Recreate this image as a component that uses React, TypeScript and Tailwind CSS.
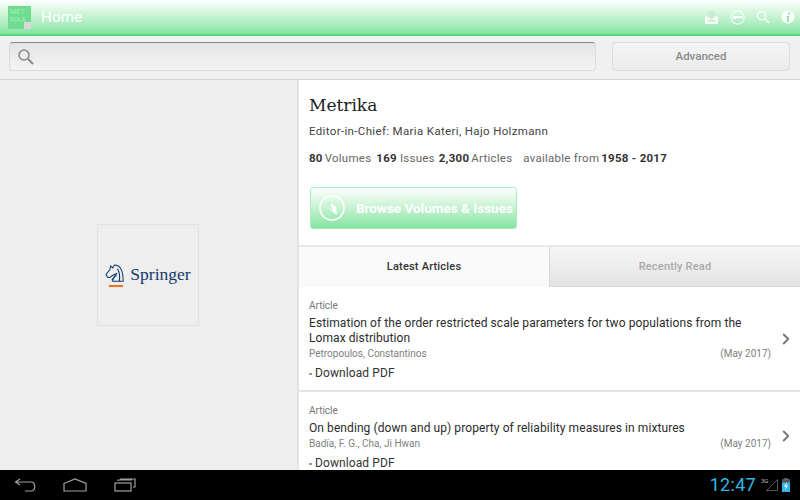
import { ChevronRight } from 'lucide-react';

function SpringerLogo() {
  return (
    <div className="flex h-[102px] w-[102px] items-center justify-center border border-[#e2e2e2] bg-[#eeeeee]">
      <div className="flex items-center">
        <svg width="21" height="27" viewBox="0 0 22 28" fill="none" stroke="#123a6b" strokeWidth="1.100" className="mr-[4px]">
          <path d="M3 16 L1 13 L5 8 L6 4 L8 6 L10 3 C15 3 19 8 19 20 L8 20 C8 16 11 15 12 12 L8 14 L5 16 Z" />
          <path d="M13 7 C15 10 16 14 15 20" />
          <path d="M7 19 L12 13" />
          <path d="M4 25 L19 25" stroke="#e2762c" strokeWidth="2.200" />
        </svg>
        <span className="font-['Liberation_Serif',serif] text-[17.500px] leading-none text-[#123a6b]">Springer</span>
      </div>
    </div>
  );
}

function ArticleRow({ title, authors, compact }: { title: React.ReactNode; authors: string; compact?: boolean }) {
  return (
    <div className={`relative border-b-2 border-[#e4e4e4] bg-white pl-[11px] pr-[29px] pt-[12px] ${compact ? 'h-[90px]' : 'h-[105px]'}`}>
      <div className="text-[10px] leading-[13px] text-[#777777]">Article</div>
      <div className="mt-[4px] text-[12px] leading-[15px] tracking-[0.08px] text-[#2c2c2c]">{title}</div>
      <div className="flex justify-between text-[10px] leading-[15px] text-[#808080]">
        <span>{authors}</span>
        <span>(May 2017)</span>
      </div>
      <div className="mt-[5px] flex items-center text-[12px] leading-[15px] tracking-[0.1px] text-[#333333]">
        <span className="mr-[3px] h-[2px] w-[3px] bg-[#999999]" />
        Download PDF
      </div>
      <ChevronRight className="absolute right-[5px] top-1/2 -translate-y-1/2 text-[#777777]" size={18} strokeWidth={2.5} />
    </div>
  );
}

export default function App() {
  return (
    <div className="flex h-[500px] w-[800px] flex-col overflow-hidden bg-[#eeeeee] font-['Roboto',sans-serif]">
      {/* action bar */}
      <div className="flex h-[36px] shrink-0 items-center border-b-2 border-[#4fdc7a] bg-gradient-to-b from-white to-[#84e4a2] pl-[8px] pr-[5px]">
        <div className="relative mt-[1px] h-[23px] w-[23px] bg-[#6fdc90] pl-[2px] pt-[2px] text-[7px] leading-[8px] tracking-[0.2px] text-[#a5ecba]">
          MET<br />RIKA
          <span className="absolute bottom-0 right-0 h-[7px] w-[7px] bg-[#d8d8d8]" />
        </div>
        <span className="ml-[10px] mt-[1px] text-[15px] tracking-[0.2px] text-white">Home</span>
        <div className="ml-auto flex items-center gap-[11px]">
          <svg width="15" height="15" viewBox="0 0 16 16" fill="white" opacity="0.9">
            <path d="M5 1h6v4h2L8 8.500 3 5h2z" fill="#c9ecd4" />
            <path d="M1 7h3l4 3 4-3h3v8H1z" />
            <rect x="4" y="11" width="8" height="1" fill="#9bdcae" />
          </svg>
          <svg width="15" height="15" viewBox="0 0 17 17" fill="none" stroke="white" strokeWidth="1.200" opacity="0.9">
            <circle cx="8.500" cy="8.500" r="7.500" />
            <path d="M3.500 8.500h10v-1h-7" strokeWidth="1.500" />
            <circle cx="5" cy="8.500" r="1.500" fill="white" />
          </svg>
          <svg width="14" height="14" viewBox="0 0 15 15" fill="none" stroke="white" strokeWidth="1.300" opacity="0.9">
            <circle cx="6" cy="6" r="4.500" />
            <path d="M9.500 9.500L14 14" strokeWidth="1.600" />
          </svg>
          <svg width="14" height="14" viewBox="0 0 15 15">
            <circle cx="7.500" cy="7.500" r="7" fill="white" />
            <circle cx="8.500" cy="3.800" r="1.200" fill="#84e4a2" />
            <path d="M6 6.500h3L8 11.500h1l-.3 1H5.800L7 7.500H5.800z" fill="#84e4a2" />
          </svg>
        </div>
      </div>

      {/* search bar */}
      <div className="flex h-[44px] shrink-0 items-center gap-[16px] border-b border-[#d6d6d6] bg-[#f0f0f0] pb-[2px] pl-[9px] pr-[10px]">
        <div className="flex h-[29px] w-[587px] items-center rounded-[4px] border border-[#dcdcdc] border-t-[#888888] bg-gradient-to-b from-[#e4e4e4] to-[#f4f4f4] pl-[7px]">
          <svg width="17" height="17" viewBox="0 0 17 17" fill="none" stroke="#888888" strokeWidth="1.500">
            <circle cx="7" cy="7" r="5" />
            <path d="M11 11l5 5" strokeWidth="2" />
          </svg>
        </div>
        <div className="flex h-[29px] w-[178px] items-center justify-center rounded-[4px] border border-[#dcdcdc] bg-gradient-to-b from-[#f4f4f4] to-[#ebebeb] pt-[1px] text-[11.500px] font-medium text-[#8a8a8a]">
          Advanced
        </div>
      </div>

      <div className="flex min-h-0 flex-1">
        {/* cover */}
        <div className="flex w-[299px] shrink-0 items-center justify-center border-r-2 border-[#e4e4e4] bg-[#eeeeee] pr-[1px]">
          <SpringerLogo />
        </div>

        {/* details */}
        <div className="min-w-0 flex-1 overflow-hidden bg-white">
          <div className="h-[167px] border-b-2 border-[#e8e8e8] pl-[10px] pt-[13px]">
            <div className="font-['DejaVu_Serif',serif] text-[17px] leading-[24px] text-[#222222]">Metrika</div>
            <div className="mt-[7px] text-[11.500px] leading-[15px] tracking-[0.35px] text-[#444444]">Editor-in-Chief: Maria Kateri, Hajo Holzmann</div>
            <div className="mt-[12px] flex text-[11.500px] leading-[15px] tracking-[0.25px] text-[#666666]">
              <b className="mr-[2px] font-bold text-[#333333]">80</b>Volumes
              <b className="ml-[5px] mr-[3px] font-bold text-[#333333]">169</b>Issues
              <b className="ml-[4px] mr-[2px] font-bold text-[#333333]">2,300</b>Articles
              <span className="ml-[11px]">available from</span>
              <b className="ml-[2px] font-bold text-[#333333]">1958 - 2017</b>
            </div>
            <div className="ml-[1px] mt-[21px] flex h-[42px] w-[207px] items-center rounded-[3px] border border-[#a9efbd] bg-gradient-to-b from-white to-[#84e4a2] pl-[8px] text-white">
              <svg width="26" height="26" viewBox="0 0 26 26" fill="none">
                <circle cx="13" cy="13" r="12" stroke="white" strokeWidth="1.500" />
                <path d="M10 7l7 5 1 8-7-5z" fill="white" />
                <path d="M10 7l3 9" stroke="#a8e8bc" strokeWidth="1" />
              </svg>
              <span className="ml-[11px] whitespace-nowrap text-[13.500px] font-bold">Browse Volumes &amp; Issues</span>
            </div>
          </div>

          {/* tabs */}
          <div className="flex h-[40px]">
            <div className="flex w-[250px] items-center justify-center bg-[#fafafa] pt-[1px] text-[11px] font-medium tracking-[0.2px] text-[#333333]">Latest Articles</div>
            <div className="flex flex-1 items-center justify-center border-b border-l border-[#d8d8d8] bg-gradient-to-b from-[#f6f6f6] to-[#e4e4e4] pt-[2px] text-[11px] font-medium tracking-[0.2px] text-[#aaaaaa]">Recently Read</div>
          </div>

          <div className="-ml-[1px]">
            <ArticleRow
              title={<>Estimation of the order restricted scale parameters for two populations from the<br />Lomax distribution</>}
              authors="Petropoulos, Constantinos"
            />
            <ArticleRow compact title="On bending (down and up) property of reliability measures in mixtures" authors="Badía, F. G., Cha, Ji Hwan" />
          </div>
        </div>
      </div>

      {/* system bar */}
      <div className="flex h-[30px] shrink-0 items-center bg-black pl-[14px] pr-[10px]">
        <svg width="22" height="14" viewBox="0 0 22 14" fill="none" stroke="#a0a0a0" strokeWidth="1.200">
          <path d="M6 1L1.500 4 6 7M2 4h15c5 0 5 9 0 9h-6" />
        </svg>
        <svg width="24" height="14" viewBox="0 0 24 14" fill="none" stroke="#a0a0a0" strokeWidth="1.200" className="ml-[27px]">
          <path d="M1 5.500L12 1l11 4.500V13H1z" />
        </svg>
        <svg width="22" height="14" viewBox="0 0 22 14" fill="none" stroke="#a0a0a0" strokeWidth="1.200" className="ml-[27px]">
          <rect x="1" y="5" width="16" height="8" />
          <path d="M4 3V2h14v0M19 9h2V1H6" />
        </svg>
        <span className="ml-auto text-[18px] leading-none tracking-[0.3px] text-[#33b5e5]">12:47</span>
        <span className="relative ml-[5px] flex h-[16px] w-[17px] items-start">
          <span className="text-[6px] leading-[7px] text-[#bbbbbb]">3G</span>
          <svg width="12" height="14" viewBox="0 0 14 14" fill="none" stroke="#666666" className="absolute right-0 top-[1px]">
            <path d="M0.500 13.500L13.500 0.500V13.500Z" />
          </svg>
        </span>
        <svg width="8" height="14" viewBox="0 0 8 14" className="ml-[4px]">
          <rect x="2" y="0" width="4" height="2" fill="#555555" />
          <rect x="0" y="1.500" width="8" height="12.500" fill="#33b5e5" />
          <rect x="0" y="1.500" width="8" height="3" fill="#555555" />
          <path d="M5 4L2 8.500h2L3 12l3-4.500H4z" fill="white" />
        </svg>
      </div>
    </div>
  );
}
